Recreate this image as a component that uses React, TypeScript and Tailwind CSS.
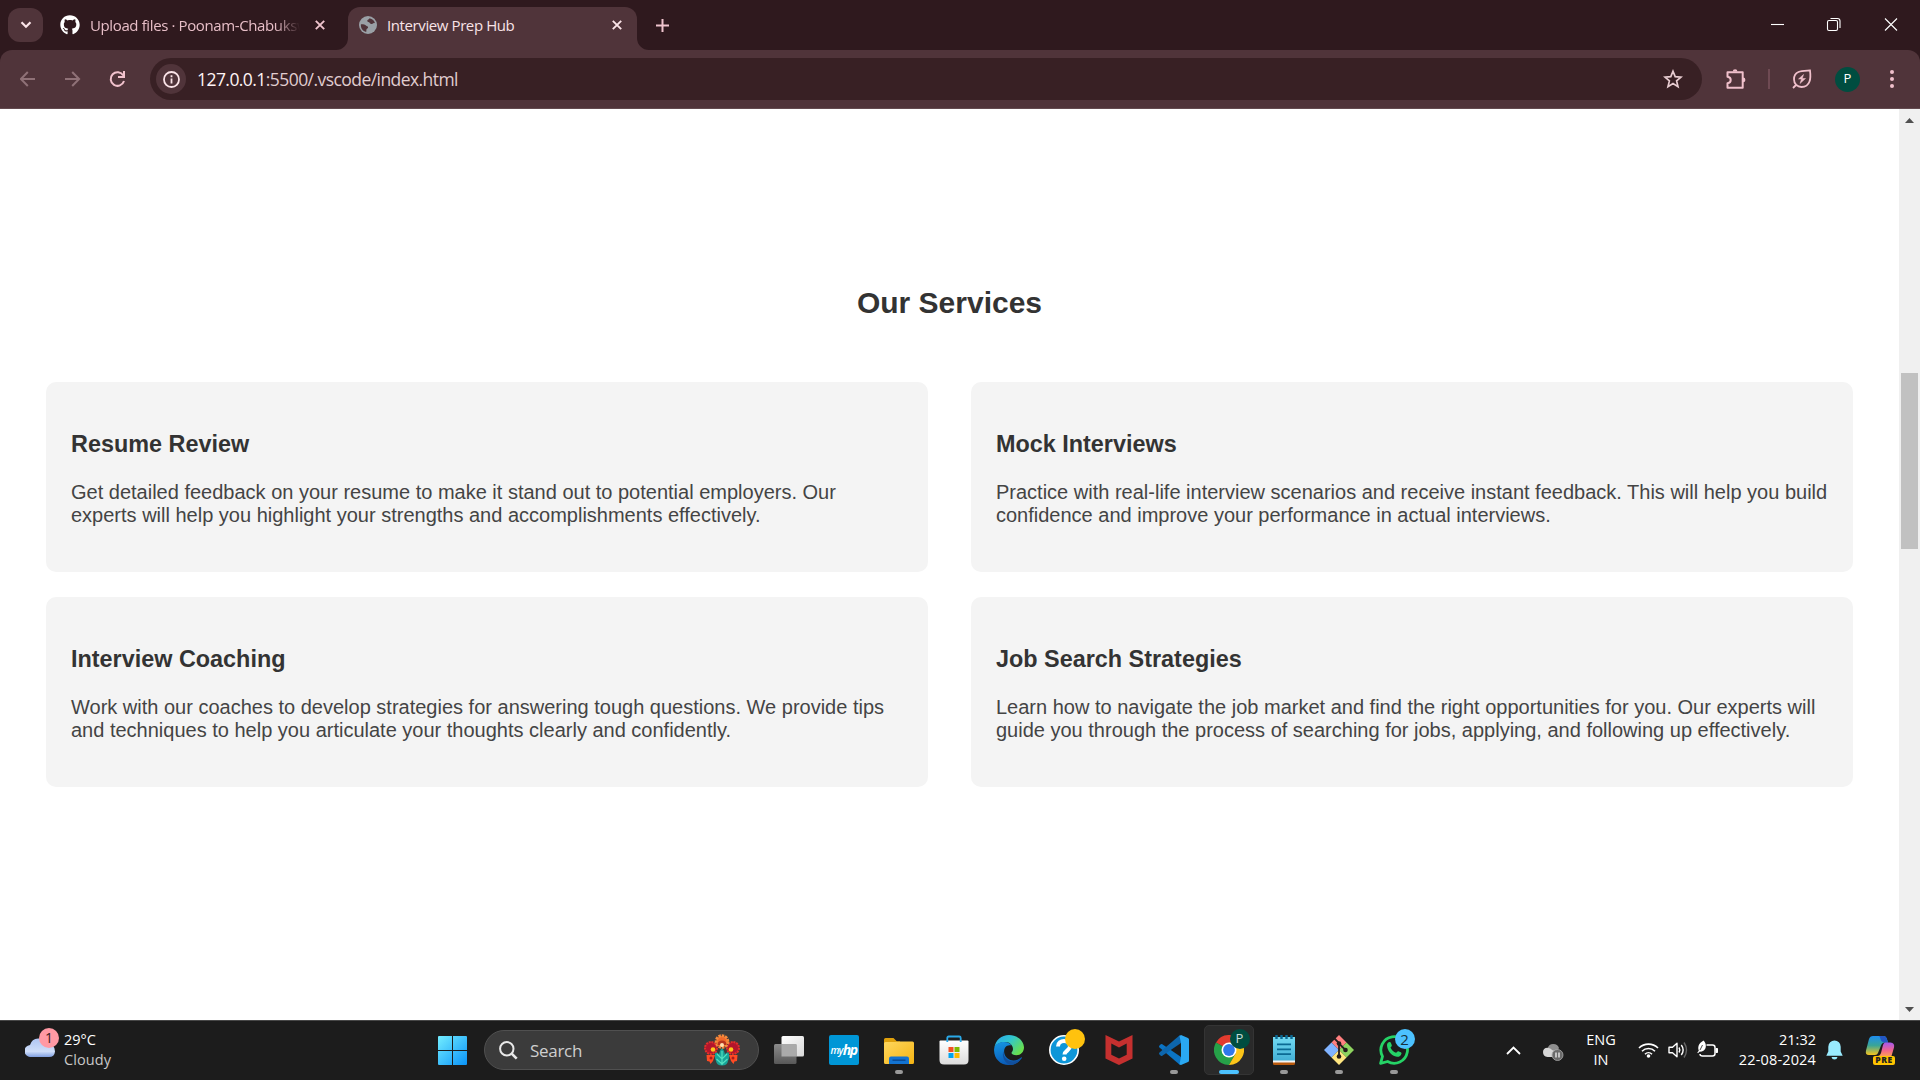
import React from "react";
import { FaGithub } from "react-icons/fa";

const ui = "font-['Open_Sans','Noto_Sans',sans-serif]";

const services = [
  {
    title: "Resume Review",
    lines: [
      "Get detailed feedback on your resume to make it stand out to potential employers. Our",
      "experts will help you highlight your strengths and accomplishments effectively.",
    ],
  },
  {
    title: "Mock Interviews",
    lines: [
      "Practice with real-life interview scenarios and receive instant feedback. This will help you build",
      "confidence and improve your performance in actual interviews.",
    ],
  },
  {
    title: "Interview Coaching",
    lines: [
      "Work with our coaches to develop strategies for answering tough questions. We provide tips",
      "and techniques to help you articulate your thoughts clearly and confidently.",
    ],
  },
  {
    title: "Job Search Strategies",
    lines: [
      "Learn how to navigate the job market and find the right opportunities for you. Our experts will",
      "guide you through the process of searching for jobs, applying, and following up effectively.",
    ],
  },
];

function Cross({ color }: { color: string }) {
  return (
    <svg width="10" height="10" viewBox="0 0 10 10" fill="none" stroke={color} strokeWidth="1.9">
      <path d="M0.8 0.8 9.2 9.2M9.2 0.8 0.8 9.2" />
    </svg>
  );
}

function TabStrip() {
  return (
    <div className="flex h-[50px] items-start bg-[#2f191e]">
      <div className="ml-2 mt-2 flex h-[34px] w-[35px] items-center justify-center rounded-xl bg-[#50343a]">
        <svg width="12" height="8" viewBox="0 0 12 8" fill="none" stroke="#fbe4e8" strokeWidth="2.2">
          <path d="M1.5 1.3 6 5.8l4.5-4.5" />
        </svg>
      </div>
      <div className="ml-[17px] flex h-[50px] w-[288px] items-center">
        <FaGithub size={20} color="#fff" />
        <div className="ml-[10px] h-[24px] w-[210px] whitespace-nowrap text-[15px] leading-[24px] tracking-[-0.38px] text-[#e8bfc8] [mask-image:linear-gradient(to_right,black_88%,transparent_100%)]">
          Upload files · Poonam-Chabuksw
        </div>
        <div className="ml-[15px]">
          <Cross color="#f0c4ce" />
        </div>
      </div>
      <div className="relative mt-[7px] flex h-[43px] w-[289px] items-center rounded-t-[12px] bg-[#50343a] pb-[7px]">
        <svg className="absolute -left-3 bottom-0" width="12" height="12" viewBox="0 0 12 12">
          <path d="M12 0v12H0A12 12 0 0 0 12 0Z" fill="#50343a" />
        </svg>
        <svg className="absolute -right-3 bottom-0" width="12" height="12" viewBox="0 0 12 12">
          <path d="M0 0v12h12A12 12 0 0 1 0 0Z" fill="#50343a" />
        </svg>
        <svg className="ml-[11px]" width="18" height="18" viewBox="0 0 18 18">
          <circle cx="9" cy="9" r="9" fill="#9aa0a6" />
          <path d="M1.9 8.3c2.200-.100 4.200.300 5.100 1.300c.600.800 1.900 .400 2.100 1.700.200 1.500-1.700 1.200-1.700 2.500 0 1-.200 2-.200 2.200C3.700 15.300 1.500 12 1.900 8.300ZM10.500 2.200C10.300 3.600 8.400 3.200 8.200 4.700c-.100 1.400 2 1 2.600 2.200.700 1.300 2.500 1.300 3.300.600.600-.500 1.200-.400 1.900-.300C15.500 4.800 13.400 2.700 10.500 2.200Z" fill="#50343a" />
        </svg>
        <div className="ml-[10px] w-[225px] whitespace-nowrap text-[15px] leading-[24px] tracking-[-0.4px] text-[#f9e3e7]">Interview Prep Hub</div>
        <Cross color="#fbe4e8" />
      </div>
      <svg className="ml-[19px] mt-[19px]" width="13" height="13" viewBox="0 0 13 13" stroke="#f0c4ce" strokeWidth="2">
        <path d="M6.500 0v13M0 6.500h13" />
      </svg>
      <svg className="ml-auto mr-[21px] mt-[17px]" width="128" height="15" viewBox="0 0 128 15" fill="none" stroke="#fff" strokeWidth="1.100">
        <path d="M0 7.500h13" />
        <rect x="56.500" y="3.500" width="10" height="10" rx="1.500" />
        <path d="M59.500 1.500h7a2.500 2.500 0 0 1 2.500 2.500v7" />
        <path d="M114 1.500l12 12M126 1.500l-12 12" />
      </svg>
    </div>
  );
}

function Toolbar() {
  return (
    <div className="bg-[#2f191e]">
      <div className="flex h-[59px] items-center rounded-t-xl border-b border-[#634a4f] bg-[#50343a]">
        <svg className="ml-5" width="106" height="18" viewBox="0 0 106 18" fill="none" strokeWidth="2">
          <g stroke="#8f7177">
            <path d="M15 9H1M7.800 2 .900 9l6.900 7" />
            <path d="M45 9h14M52.200 2 59.100 9l-6.900 7" />
          </g>
          <path d="M103.300 5.500A6.800 6.800 0 1 0 104 11" stroke="#f2c2cd" />
          <path d="M104 1v6h-6" stroke="#f2c2cd" />
        </svg>
        <div className="ml-6 flex h-[42px] w-[1552px] items-center rounded-full bg-[#382024]">
          <div className="ml-[6px] flex h-[30px] w-[30px] items-center justify-center rounded-full bg-[#50343a]">
            <svg width="17" height="17" viewBox="0 0 17 17" fill="none" stroke="#fbe4e8" strokeWidth="1.800">
              <circle cx="8.500" cy="8.500" r="7.500" />
              <path d="M8.500 7.500v5M8.500 4.300v1.900" />
            </svg>
          </div>
          <div className="ml-[11px] whitespace-nowrap text-[17.500px] leading-[26px] tracking-[-0.560px] text-[#e0cdd0]">
            <span className="text-[#fff4f5]">127.0.0.1</span>:5500/.vscode/index.html
          </div>
          <svg className="ml-auto mr-[19px]" width="20" height="20" viewBox="0 0 20 20" fill="none" stroke="#e9cdd2" strokeWidth="1.700">
            <path d="m10 2.200 2.200 5.400 5.800.500-4.400 3.800 1.400 5.700-5-3.100-5 3.100 1.400-5.700L2 8.100l5.800-.500Z" />
          </svg>
        </div>
        <svg className="ml-[23px]" width="22" height="22" viewBox="0 0 22 22">
          <path d="M2.500 4.200h15.200v15.600H2.500v-4.500c2.200-.300 3.200-1.700 3.200-3.300s-1-3-3.200-3.300Z" fill="none" stroke="#f0c0cb" strokeWidth="2" strokeLinejoin="round" />
          <path d="M7.800 3.500a2.300 2.300 0 0 1 4.600 0ZM18 9.500a2.400 2.400 0 0 1 0 4.800Z" fill="#f0c0cb" />
        </svg>
        <div className="ml-[21px] h-5 w-[2px] bg-[#6f4a53]" />
        <svg className="ml-[22px]" width="20" height="20" viewBox="0 0 20 20" fill="none" stroke="#f0c0cb" strokeWidth="1.800">
          <path d="M18 1.500C12 2 2 1 2 10.200c0 5 3.500 7.800 7.500 7.800C18.500 18 19 9 18 1.500ZM1 19l3-3" />
          <path d="M11.500 5.500 6.500 10h3l-1.500 4.500 5.500-5h-3.200Z" fill="#f0c0cb" strokeWidth=".500" />
        </svg>
        <div className="ml-[23px] flex h-[25px] w-[25px] items-center justify-center rounded-full bg-[#004d40] text-[13px] text-white">P</div>
        <svg className="ml-[29px]" width="6" height="18" viewBox="0 0 6 18" fill="#f0c0cb">
          <circle cx="3" cy="2" r="2" />
          <circle cx="3" cy="9" r="2" />
          <circle cx="3" cy="16" r="2" />
        </svg>
      </div>
    </div>
  );
}

function Page() {
  return (
    <div className="flex h-[911px] bg-white">
      <main className="flex-1 pt-[176px] font-['Liberation_Sans',Arial,sans-serif] text-[#333]">
        <h2 className="text-center text-[30px] font-bold leading-[36px]">Our Services</h2>
        <div className="ml-[46px] mt-[61px] grid grid-cols-[882px_882px] gap-x-[43px] gap-y-[25px]">
          {services.map((s) => (
            <section key={s.title} className="h-[190px] rounded-[10px] bg-[#f4f4f4] pl-[25px] pt-[49px]">
              <h3 className="text-[23.400px] font-bold leading-[27px]">{s.title}</h3>
              <p className="mt-[23px] whitespace-nowrap text-[20px] leading-[23px] text-[#444]">
                {s.lines[0]}
                <br />
                {s.lines[1]}
              </p>
            </section>
          ))}
        </div>
      </main>
      <div className="flex w-[21px] flex-col items-center bg-[#f0f0f0]">
        <svg className="mt-[9px]" width="9" height="5" viewBox="0 0 9 5">
          <path d="M0 5h9L4.500 0Z" fill="#505050" />
        </svg>
        <div className="mt-[250px] h-[176px] w-[17px] bg-[#c1c1c1]" />
        <svg className="mb-[8px] mt-auto" width="9" height="5" viewBox="0 0 9 5">
          <path d="M0 0h9L4.500 5Z" fill="#505050" />
        </svg>
      </div>
    </div>
  );
}

function TaskIcon({ children, dot, active }: { children?: React.ReactNode; dot?: boolean; active?: boolean }) {
  return (
    <div className="flex w-[55px] justify-center">
      <div
        className={
          "relative flex h-[50px] w-[50px] items-center justify-center rounded-[5px] " +
          (active ? "border border-[#343434] bg-[#2a2a2a]" : "")
        }
      >
        {children}
        {dot && <span className="absolute bottom-[1px] left-[21px] h-[4px] w-[8px] rounded-full bg-[#999]" />}
        {active && <span className="absolute bottom-0 left-[14px] h-[4px] w-[20px] rounded-full bg-[#4cc2ff]" />}
      </div>
    </div>
  );
}

function FolkArt() {
  return (
    <svg width="36" height="32" viewBox="0 0 36 32">
      <path d="M18 31.500c-3.500 0-5.500-1.500-6-4.500-1.500-3-1.500-6-.500-9 2 .500 3 1.500 3.500 2.500.500-3 1.500-5 3-6.500 1.500 1.500 2.500 3.500 3 6.500.5-1 1.500-2 3.500-2.500 1 3 1 6-.500 9-.500 3-2.500 4.500-6 4.500Z" fill="#17a398" />
      <path d="M18 31V17M13 20l5 5 5-5M12.500 25l5.500 5 5.500-5" stroke="#53e0c1" strokeWidth="1.200" fill="none" />
      <circle cx="7" cy="14" r="6" fill="#b3152c" stroke="#e2302a" strokeWidth="2" strokeDasharray="2 .800" />
      <circle cx="29" cy="14" r="6" fill="#b3152c" stroke="#e2302a" strokeWidth="2" strokeDasharray="2 .800" />
      <g fill="#ffc61a">
        <circle cx="9" cy="15.500" r="2.300" />
        <circle cx="27" cy="15.500" r="2.300" />
      </g>
      <path d="M2.500 21 11 21l-2 6-2.500 3-1-2.500-2.500-.500ZM33.500 21 25 21l2 6 2.500 3 1-2.500 2.500-.500Z" fill="#ff4b24" />
      <circle cx="7" cy="24" r="1.500" fill="#a81c1c" />
      <circle cx="29" cy="24" r="1.500" fill="#a81c1c" />
      <circle cx="18" cy="7.500" r="5.800" fill="#f0692a" stroke="#f58a3c" strokeWidth="3" strokeDasharray="2.400 .900" />
      <path d="M13.500 11q0-4.500 4.500-4.500t4.500 4.500Z" fill="#b5341d" />
      <circle cx="18" cy="11" r="2" fill="#ffe1b0" />
    </svg>
  );
}

function AppIcons() {
  return (
    <div className="ml-[2px] flex items-center pb-px">
      <TaskIcon>
        <svg width="30" height="28" viewBox="0 0 30 28">
          <defs>
            <linearGradient id="tv" x2="1" y2="1"><stop stopColor="#fff" /><stop offset="1" stopColor="#d8d8d8" /></linearGradient>
            <linearGradient id="tv2" x2="0" y2="1"><stop stopColor="#8b8b8b" /><stop offset="1" stopColor="#585858" /></linearGradient>
          </defs>
          <rect x="7.500" width="22.500" height="20.500" rx="1.500" fill="url(#tv)" />
          <rect y="8" width="22.500" height="20" rx="1.500" fill="url(#tv2)" />
          <path d="M7.500 8h15v12.500h-15Z" fill="#aaa" />
        </svg>
      </TaskIcon>
      <TaskIcon>
        <div className="flex h-[30px] w-[30px] items-center justify-center rounded-[2px] bg-[#0096d6] italic leading-none text-white">
          <span className="text-[10px] font-semibold tracking-[-0.800px]">my</span>
          <span className="text-[14px] font-bold tracking-[-1.500px]">hp</span>
        </div>
      </TaskIcon>
      <TaskIcon dot>
        <svg width="30" height="27" viewBox="0 0 30 27">
          <defs><linearGradient id="fo" x2="1" y2="1"><stop stopColor="#ffd75e" /><stop offset="1" stopColor="#f5b413" /></linearGradient></defs>
          <path d="M0 12V2.500Q0 1 1.500 1h8l3.500 3.500H16V12Z" fill="#dfa00c" />
          <path d="M0 6.500Q0 5 1.500 5h9.500L13.500 4.500h15Q30 4.500 30 6v19.500Q30 27 28.500 27h-27Q0 27 0 25.500Z" fill="url(#fo)" />
          <path d="M5 27v-5.500q0-2 2-2h16q2 0 2 2V27Z" fill="#1373d1" />
          <path d="M8.500 23.200h13" stroke="#0a4a94" strokeWidth="1.500" />
        </svg>
      </TaskIcon>
      <TaskIcon>
        <svg width="30" height="30" viewBox="0 0 30 30">
          <defs><linearGradient id="st" x2="0" y2="1"><stop stopColor="#fff" /><stop offset="1" stopColor="#dcdcdc" /></linearGradient></defs>
          <path d="M.500 6.500Q.500 5.500 1.500 5.500h27q1 0 1 1V25q0 4.500-4.500 4.500H5Q.500 29.500.500 25Z" fill="url(#st)" />
          <path d="M8.300 7V3q0-1.500 1.500-1.500h10.400q1.500 0 1.500 1.500v4" fill="none" stroke="#2aa9e8" strokeWidth="1.800" />
          <path d="M9.500 12h5v5h-5Z" fill="#f25022" /><path d="M15.500 12h5v5h-5Z" fill="#7fba00" />
          <path d="M9.500 18h5v5h-5Z" fill="#00a4ef" /><path d="M15.500 18h5v5h-5Z" fill="#ffb900" />
        </svg>
      </TaskIcon>
      <TaskIcon>
        <svg width="30" height="30" viewBox="0 0 30 30">
          <defs>
            <linearGradient id="ed1" x2="1" y2=".6"><stop stopColor="#2aa7f0" /><stop offset=".5" stopColor="#31c6cf" /><stop offset="1" stopColor="#68df4e" /></linearGradient>
            <linearGradient id="ed2" x2=".3" y2="1"><stop stopColor="#1597e5" /><stop offset="1" stopColor="#0a5cb8" /></linearGradient>
          </defs>
          <path d="M.300 13C1.500 5 7.500 0 15 0c9 0 15 6.500 15 12.500 0 4.500-3.500 7.700-7.500 7.700-3 0-5-1-5-2.200 0-1 1.500-1.500 1.500-4C19 10.500 16 7 11 7 6 7 1.500 9.500.300 13Z" fill="url(#ed1)" />
          <path d="M.100 14C.500 9.500 5 7 10 7c4 0 6 1.500 7.500 3.500C12 9 9 14 10.500 19c1 3.500 4.500 6.500 9 6.500 3 0 6-1.500 7.500-3 1-.500 1 .300.500 1C24 28.500 19.500 30 15 30 6 30-.500 23 .100 14Z" fill="url(#ed2)" />
          <path d="M9.500 16c-.500 5 3 10.500 10 10.500 3 0 6-1.300 7.500-3.500-2 4.500-6.500 7-11 7-5.500-2-8.500-9.500-6.500-14Z" fill="#124f9c" />
        </svg>
      </TaskIcon>
      <TaskIcon>
        <svg width="30" height="30" viewBox="0 0 30 30">
          <circle cx="15" cy="15" r="14.200" fill="#0e96d8" stroke="#fff" strokeWidth="1.600" />
          <path d="M9 11.500C9 7.500 12 6 15 6s6 2 6 5.300c0 4-5.500 4.500-5.500 8.200" fill="none" stroke="#fff" strokeWidth="4" />
          <circle cx="15.200" cy="23.800" r="2.300" fill="#fff" />
        </svg>
        <span className="absolute right-[4px] top-[4px] h-5 w-5 rounded-full bg-[#ffc20e]" />
      </TaskIcon>
      <TaskIcon>
        <svg width="28" height="30" viewBox="0 0 28 30">
          <path d="M.500 0 14 6.500 27.500 0v23.500L14 30 .500 23.500Z" fill="#c5302f" />
          <path d="M6.300 8.500 14 12.500l7.700-4v11.300L14 23.500l-7.700-3.700Z" fill="#1c1c1c" />
        </svg>
      </TaskIcon>
      <TaskIcon dot>
        <svg width="30" height="30" viewBox="0 0 30 30">
          <path d="M22 22 3.300 9.300q-.800-.500-1.500 0L.500 10.500q-1 1 0 2L21 30l2-7Z" fill="#0b74c4" />
          <path d="M22 8 3.300 20.700q-.800.500-1.500 0L.500 19.500q-1-1 0-2L21 0l2 7Z" fill="#0d66ad" />
          <path d="m22 0 7 3q1 .500 1 1.500v21q0 1-1 1.500l-7 3q-1 0-1.500-1L22 22V8l-1.500-7Z" fill="#2aa8f2" />
        </svg>
      </TaskIcon>
      <TaskIcon active>
        <svg width="30" height="30" viewBox="0 0 30 30">
          <path d="M15 15 2 7.500A15 15 0 0 1 28 7.500Z" fill="#e33b2e" />
          <path d="M15 15 2 7.500A15 15 0 0 0 15 30l6.500-11.200Z" fill="#26a148" />
          <path d="M15 7.500h13A15 15 0 0 1 15 30l6.500-11.300Z" fill="#fcc519" />
          <circle cx="15" cy="15" r="7.500" fill="#fff" />
          <circle cx="15" cy="15" r="5.900" fill="#2f78eb" />
        </svg>
        <span className="absolute right-[3px] top-[3px] flex h-5 w-5 items-center justify-center rounded-full bg-[#004d40] text-[13px] text-[#c8dcd8]">P</span>
      </TaskIcon>
      <TaskIcon dot>
        <svg width="22" height="30" viewBox="0 0 22 30">
          <defs><linearGradient id="np" x2="0" y2="1"><stop stopColor="#72daf2" /><stop offset="1" stopColor="#43b0d6" /></linearGradient></defs>
          <path d="M0 27h22v1.500Q22 30 20.500 30h-19Q0 30 0 28.500Z" fill="#b8590d" />
          <path d="M0 24h22v3.500H0Z" fill="#f4f4f4" />
          <path d="M0 2h22v23.500H0Z" fill="url(#np)" />
          <path d="M4 9.300h14M4 14.300h14M4 19.200h14" stroke="#0b6a94" strokeWidth="1.800" />
          <path d="M3.500 0v4M8.500 0v4M13.500 0v4M18.500 0v4" stroke="#0b6a94" strokeWidth="2.400" />
        </svg>
      </TaskIcon>
      <TaskIcon dot>
        <svg width="30" height="30" viewBox="0 0 30 30">
          <path d="m15 0 7.500 7.500L15 15 7.500 7.500Z" fill="#ff7f7f" />
          <path d="m7.500 7.500 7.500 7.500-7.500 7.500L0 15Z" fill="#80b3ff" />
          <path d="M22.500 7.500 30 15l-7.500 7.500L15 15Z" fill="#8dd35f" />
          <path d="m15 15 7.500 7.500L15 30l-7.500-7.500Z" fill="#ffe680" />
          <path d="M10.500 3.500 15 8v14M15 8.500l6.500 6.500" stroke="#241c1c" strokeWidth="1.800" fill="none" />
          <g fill="#241c1c"><circle cx="15" cy="8.500" r="2.300" /><circle cx="15" cy="21.500" r="2.300" /><circle cx="21.500" cy="15" r="2.300" /></g>
        </svg>
      </TaskIcon>
      <TaskIcon dot>
        <svg width="30" height="30" viewBox="0 0 30 30" fill="none">
          <path d="M1.600 28.400 3.500 21.300A13.300 13.300 0 1 1 8.600 26.500Z" stroke="#25d366" strokeWidth="2.800" strokeLinejoin="round" />
          <path d="M8 10c0-2 1.500-3 2.500-3 1 0 1.300.500 2.300 3.200.300 1-.800 1.500-1.300 2.300 1 2.500 3 4.300 5.500 5.300.800-.500 1.500-2 2.500-1.500 3 1.200 3 1.500 3 2.200-.500 2.500-2.500 3.500-4.500 3.300C12.500 21 8 15.500 8 10Z" fill="#25d366" />
        </svg>
        <span className="absolute right-[4px] top-[4px] flex h-5 w-5 items-center justify-center rounded-full bg-[#4cc2ff] text-[15px] text-[#15313f]">2</span>
      </TaskIcon>
    </div>
  );
}

function Tray() {
  return (
    <div className="ml-auto flex h-full items-center pb-px text-[14.500px] leading-[20px] text-white">
      <svg className="mr-[22px]" width="15" height="9" viewBox="0 0 15 9" fill="none" stroke="#fff" strokeWidth="1.800">
        <path d="m1 8 6.500-6.500L14 8" />
      </svg>
      <svg className="mr-[22px] mt-[3px]" width="21" height="18" viewBox="0 0 21 18">
        <path d="M4.500 5.500A6 6 0 0 1 16 5l-4 7Z" fill="#8f8f8f" />
        <path d="M0 9q0-4 4.500-4.200 3 0 5 2.500L16 9l-4 5H4.500Q0 13.500 0 9Z" fill="#d6d6d6" />
        <circle cx="14.500" cy="12" r="5.500" fill="#6a6a6a" stroke="#aaa" strokeWidth=".800" />
        <path d="M13 9.500v5M16 9.500v5" stroke="#fff" strokeWidth="1.200" />
      </svg>
      <div className="mr-[22px] w-[30px] text-center">ENG<br />IN</div>
      <svg className="mb-px mr-[9px]" width="21" height="16" viewBox="0 0 21 16" fill="none" stroke="#fff" strokeWidth="1.600">
        <path d="M1 6a13.500 13.500 0 0 1 19 0M4 9.200a9.200 9.200 0 0 1 13 0M7 12.200a5 5 0 0 1 7 0" />
        <circle cx="10.500" cy="14" r="1.800" fill="#fff" stroke="none" />
      </svg>
      <svg className="mb-px mr-[9px]" width="20" height="18" viewBox="0 0 20 18" fill="none" stroke="#fff" strokeWidth="1.400">
        <path d="M1 6.300h3.500L9 2.300v13.400l-4.500-4H1Z" strokeLinejoin="round" />
        <path d="M11 6.500q1.600 2.500 0 5M13.300 4q3.700 5 0 10" />
        <path d="M16 1.500q5 7.500 0 15" stroke="#666" />
      </svg>
      <svg className="mb-[3px] mr-[20px]" width="21" height="18" viewBox="0 0 21 18" fill="none">
        <path d="M9.500 5h6q2.500 0 2.500 2.500v6q0 2.500-2.500 2.500H5.500Q3 16 3 14" stroke="#fff" strokeWidth="1.500" />
        <path d="M19 8.500h1.500v4H19Z" fill="#fff" stroke="#fff" />
        <path d="M6.500.500c1.500 1.500 2.700 3.500 2.300 6.500-.400 3-2.800 4.800-6.300 4.800L1 13.300.300 12.500l1.500-1.800C.500 7 1.500 3.500 6.500.500Z" fill="#fff" />
        <path d="M5.500 5 3 10" stroke="#1c1c1c" strokeWidth=".800" />
      </svg>
      <div className="mb-px mr-[10px] w-[78px] whitespace-nowrap text-right">
        <div>21:32</div>
        <div className="flex justify-end tracking-[0.150px]">22-08-2024</div>
      </div>
      <svg className="mr-[22px]" width="17" height="20" viewBox="0 0 17 20" fill="#99ebff">
        <path d="M8.500.500a6.200 6.200 0 0 1 6.200 6.200v4.800l2 4.200H.300l2-4.200V6.700A6.200 6.200 0 0 1 8.500.500ZM5.500 17h6q-.500 2.500-3 2.500t-3-2.500Z" />
      </svg>
      <div className="relative mr-[25px] h-[30px] w-[30px]">
        <svg width="30" height="30" viewBox="0 0 30 30">
          <defs>
            <linearGradient id="cp1" x2="0" y2="1"><stop stopColor="#1d8df0" /><stop offset=".5" stopColor="#3aa596" /><stop offset="1" stopColor="#f7c51e" /></linearGradient>
            <linearGradient id="cp2" x2="0" y2="1"><stop stopColor="#a358ef" /><stop offset=".6" stopColor="#f4668b" /><stop offset="1" stopColor="#fc9d58" /></linearGradient>
          </defs>
          <path d="M8 1h11q2 0 2.800 2.500L23 7.500h-3q-3 0-4 3L13 18q-.700 2-3 2H4Q0 20 1 15.500L4 4Q5 1 8 1Z" fill="url(#cp1)" />
          <path d="M14 1h5q2 0 2.800 2.500L23 7.500h-4.500Q16 7 15.500 4 15 1.500 14 1Z" fill="#2357c4" />
          <path d="M20 7.500h5.500Q30 8 29 12.500L26.500 21H12.500q2.500 0 3.500-3l2-8q.500-2 2-2.500Z" fill="url(#cp2)" />
        </svg>
        <span className="absolute bottom-0 right-0 flex h-[9px] w-[22px] items-center justify-center rounded-[2px] bg-[#ffc400] text-[8.500px] font-extrabold leading-none tracking-[0.600px] text-[#222]">PRE</span>
      </div>
    </div>
  );
}

function Taskbar() {
  return (
    <div className="flex h-[60px] items-center border-t border-[#474747] bg-[#1c1c1c]">
      <div className="ml-[25px] flex w-[413px] items-center pb-[2px]">
        <div className="relative h-[30px] w-[34px]">
          <svg className="mt-[2px]" width="30" height="20" viewBox="0 0 30 20">
            <defs><linearGradient id="cl" x2="0" y2="1"><stop stopColor="#aec5f2" /><stop offset=".7" stopColor="#cfdef9" /><stop offset="1" stopColor="#7f9fe0" /></linearGradient></defs>
            <path d="M6 20a6 6 0 0 1-1-12A9 9 0 0 1 22 7q8 0 8 7.500Q29.500 20 24 20Z" fill="url(#cl)" />
          </svg>
          <span className="absolute -top-[7px] left-[14px] flex h-5 w-5 items-center justify-center rounded-full bg-[#ff99a4] text-[14px] text-[#3a1a1e]">1</span>
        </div>
        <div className="ml-[5px] text-[14.500px] leading-[20px] text-white">
          <div>29°C</div>
          <div className="tracking-[0.100px] text-[#c8c8c8]">Cloudy</div>
        </div>
      </div>
      <svg className="mb-px" width="29" height="29" viewBox="0 0 29 29">
        <defs><linearGradient id="win" x2="1" y2="1"><stop stopColor="#73edff" /><stop offset="1" stopColor="#0a93f8" /></linearGradient></defs>
        <path d="M0 1q0-1 1-1h13v14H0ZM15 0h13q1 0 1 1v13H15ZM0 15h14v14H1q-1 0-1-1ZM15 15h14v13q0 1-1 1H15Z" fill="url(#win)" />
      </svg>
      <div className="mb-px ml-[17px] flex h-[40px] w-[275px] items-center rounded-full border border-[#505050] bg-[#3b3b3b]">
        <svg className="ml-[14px]" width="19" height="19" viewBox="0 0 19 19" fill="none" stroke="#e8e8e8">
          <circle cx="7.800" cy="7.800" r="6.700" strokeWidth="2" />
          <path d="m12.700 12.700 5 5" strokeWidth="2.600" />
        </svg>
        <span className="ml-[12px] mt-px text-[17px] leading-[22px] tracking-[-0.300px] text-[#cfcfcf]">Search</span>
        <div className="ml-auto mr-[18px]"><FolkArt /></div>
      </div>
      <AppIcons />
      <Tray />
    </div>
  );
}

export default function App() {
  return (
    <div className={"h-[1080px] w-[1920px] overflow-hidden bg-white " + ui}>
      <TabStrip />
      <Toolbar />
      <Page />
      <Taskbar />
    </div>
  );
}
